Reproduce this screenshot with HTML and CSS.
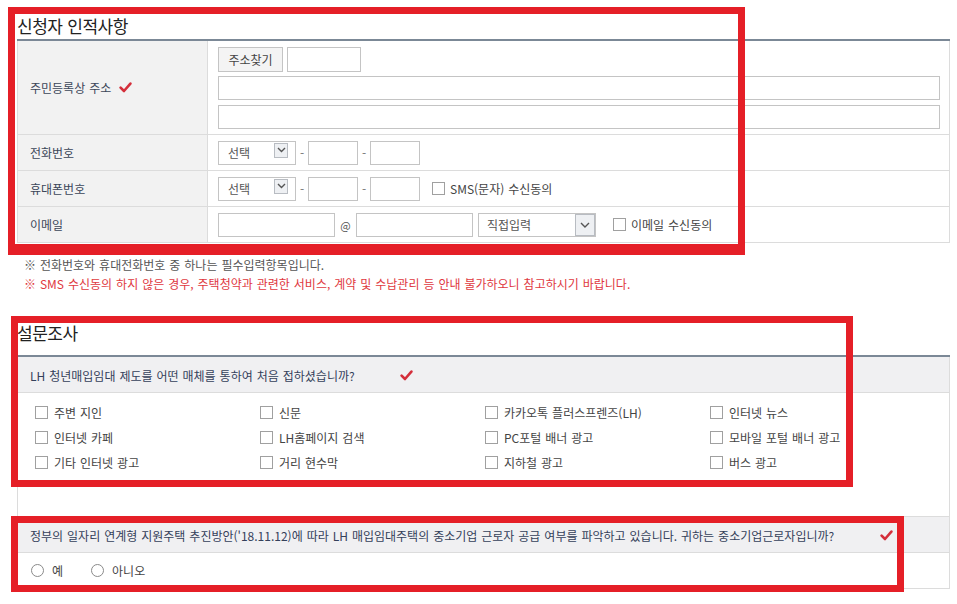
FILE: index.html
```html
<!DOCTYPE html>
<html lang="ko">
<head>
<meta charset="utf-8">
<title>신청자 인적사항</title>
<link rel="stylesheet" href="styles.css">
</head>
<body>
<div class="screen">
  <div class="content">
    <h2 class="sec-title t1">신청자 인적사항</h2>
    <div class="ftable">
      <div class="row row-addr">
        <div class="th">주민등록상 주소
          <svg class="chk" width="13" height="11" viewBox="0 0 13 11"><path d="M1.6 5.6 L5 9 L11.4 1.6" fill="none" stroke="#d42f3b" stroke-width="2.6" stroke-linecap="round" stroke-linejoin="round"/></svg>
        </div>
        <div class="td addr">
          <div class="line1"><span class="btn">주소찾기</span><span class="inp zip"></span></div>
          <span class="inp full"></span>
          <span class="inp full second"></span>
        </div>
      </div>
      <div class="row">
        <div class="th">전화번호</div>
        <div class="td">
          <span class="sel">선택<span class="arr"><svg width="9" height="6" viewBox="0 0 9 6"><path d="M1 1 L4.5 4.5 L8 1" fill="none" stroke="#555" stroke-width="1.4"/></svg></span></span>
          <span class="dash">-</span><span class="inp mid"></span>
          <span class="dash">-</span><span class="inp mid"></span>
        </div>
      </div>
      <div class="row">
        <div class="th">휴대폰번호</div>
        <div class="td">
          <span class="sel">선택<span class="arr"><svg width="9" height="6" viewBox="0 0 9 6"><path d="M1 1 L4.5 4.5 L8 1" fill="none" stroke="#555" stroke-width="1.4"/></svg></span></span>
          <span class="dash">-</span><span class="inp mid"></span>
          <span class="dash">-</span><span class="inp mid"></span>
          <label class="agree sms"><span class="cb"></span>SMS(문자) 수신동의</label>
        </div>
      </div>
      <div class="row">
        <div class="th">이메일</div>
        <div class="td">
          <span class="inp em"></span><span class="at">@</span><span class="inp em"></span>
          <span class="sel wide">직접입력<span class="arr"><svg width="10" height="6" viewBox="0 0 10 6"><path d="M1 1 L5 5 L9 1" fill="none" stroke="#555" stroke-width="1.4"/></svg></span></span>
          <label class="agree mail"><span class="cb"></span>이메일 수신동의</label>
        </div>
      </div>
    </div>
    <p class="note first">※ 전화번호와 휴대전화번호 중 하나는 필수입력항목입니다.</p>
    <p class="note red">※ SMS 수신동의 하지 않은 경우, 주택청약과 관련한 서비스, 계약 및 수납관리 등 안내 불가하오니 참고하시기 바랍니다.</p>

    <h2 class="sec-title t2">설문조사</h2>
    <div class="survey">
      <div class="q">
        <span class="qtext qt1">LH 청년매입임대 제도를 어떤 매체를 통하여 처음 접하셨습니까?</span>
        <svg class="chk" width="13" height="11" viewBox="0 0 13 11"><path d="M1.6 5.6 L5 9 L11.4 1.6" fill="none" stroke="#d42f3b" stroke-width="2.6" stroke-linecap="round" stroke-linejoin="round"/></svg>
      </div>
      <div class="ans1">
        <label class="opt"><span class="cb"></span>주변 지인</label>
        <label class="opt"><span class="cb"></span>신문</label>
        <label class="opt"><span class="cb"></span>카카오톡 플러스프렌즈(LH)</label>
        <label class="opt"><span class="cb"></span>인터넷 뉴스</label>
        <label class="opt"><span class="cb"></span>인터넷 카페</label>
        <label class="opt"><span class="cb"></span>LH홈페이지 검색</label>
        <label class="opt"><span class="cb"></span>PC포털 배너 광고</label>
        <label class="opt"><span class="cb"></span>모바일 포털 배너 광고</label>
        <label class="opt"><span class="cb"></span>기타 인터넷 광고</label>
        <label class="opt"><span class="cb"></span>거리 현수막</label>
        <label class="opt"><span class="cb"></span>지하철 광고</label>
        <label class="opt"><span class="cb"></span>버스 광고</label>
      </div>
      <div class="q">
        <span class="qtext qt2">정부의 일자리 연계형 지원주택 추진방안('18.11.12)에 따라 LH 매입임대주택의 중소기업 근로자 공급 여부를 파악하고 있습니다. 귀하는 중소기업근로자입니까?</span>
        <svg class="chk" width="13" height="11" viewBox="0 0 13 11"><path d="M1.6 5.6 L5 9 L11.4 1.6" fill="none" stroke="#d42f3b" stroke-width="2.6" stroke-linecap="round" stroke-linejoin="round"/></svg>
      </div>
      <div class="ans2">
        <label class="radio yes"><span class="rd"></span>예</label>
        <label class="radio"><span class="rd"></span>아니오</label>
      </div>
    </div>
  </div>

  <div class="mark m1"></div>
  <div class="mark m2"></div>
  <div class="mark m3"></div>
</div>
</body>
</html>
```

FILE: styles.css
```css
* { box-sizing: border-box; }
html, body { margin: 0; padding: 0; background: #fff; }
body {
  font-family: "Noto Sans CJK KR", "Noto Sans", sans-serif;
  font-size: 12px;
  color: #333;
  letter-spacing: 0;
  word-spacing: 0.6px;
}
.screen { position: relative; width: 957px; height: 604px; overflow: hidden; }
.content { margin-left: 17px; width: 933px; }

.sec-title {
  margin: 0;
  font-weight: 400;
  font-size: 17px;
  letter-spacing: -0.5px;
  color: #222;
  line-height: 21px;
  border-bottom: 2px solid #7b8896;
}
.t1 { padding-top: 15px; height: 41px; }
.t2 { margin-top: 29px; height: 35px; }

.ftable { border-left: 1px solid #dcdcdc; border-right: 1px solid #dcdcdc; }
.row { display: flex; height: 36px; border-bottom: 1px solid #dcdcdc; }
.row-addr { height: 94px; }
.th {
  width: 190px;
  flex: none;
  background: #f2f2f2;
  border-right: 1px solid #dcdcdc;
  padding-left: 12px;
  display: flex;
  align-items: center;
  color: #3b4659;
}
.th .chk { margin-left: 8px; }
.td { flex: 1; padding: 0 9px 0 10px; display: flex; align-items: center; }
.td.addr { flex-direction: column; align-items: stretch; justify-content: flex-start; padding-top: 6px; }

.inp { display: block; height: 24px; border: 1px solid #c4c4c4; background: #fff; flex: none; }
.line1 { display: flex; gap: 4px; height: 25px; margin-bottom: 4px; }
.btn {
  height: 25px; width: 65px;
  border: 1px solid #c4c4c4;
  background: #f4f4f4;
  text-align: center;
  line-height: 23px;
  color: #444;
}
.zip { width: 74px; height: 25px; }
.full { width: 100%; }
.second { margin-top: 5px; }

.sel {
  position: relative;
  display: block;
  flex: none;
  width: 78px; height: 24px;
  border: 1px solid #c4c4c4;
  padding-left: 9px;
  line-height: 22px;
  color: #555;
}
.sel .arr {
  position: absolute;
  top: 1px; right: 7px;
  width: 14px; height: 15px;
  border: 1px solid #b8bcc2;
  background: #eef0f3;
  display: flex; align-items: center; justify-content: center;
}
.sel.wide { width: 118px; margin-left: 5px; padding-left: 8px; }
.sel.wide .arr { top: 0; right: 0; width: 20px; height: 22px; }

.dash { width: 12px; text-align: center; color: #777; flex: none; }
.mid { width: 50px; }
.em { width: 117px; }
.at { width: 21px; text-align: center; color: #555; font-size: 11px; flex: none; }

.cb { width: 13px; height: 13px; border: 1px solid #a0a0a0; background: #fff; display: inline-block; flex: none; }
.agree { display: flex; align-items: center; gap: 5px; color: #444; }
.sms { margin-left: 12px; }
.mail { margin-left: 17px; }

.note { margin: 0; line-height: 19px; color: #555; padding-left: 7px; }
.note.first { margin-top: 12px; }
.note.red { color: #e0383e; }

.survey { border-left: 1px solid #dcdcdc; border-right: 1px solid #dcdcdc; }
.q {
  height: 36px;
  background: #f0f0f2;
  border-bottom: 1px solid #dcdcdc;
  padding: 2px 0 0 12px;
  display: flex;
  align-items: center;
  color: #34405a;
}
.qt1 { width: 370px; flex: none; }
.qt2 { width: 850px; flex: none; white-space: nowrap; }
.ans1 {
  height: 124px;
  border-bottom: 1px solid #dcdcdc;
  padding: 7px 0 0 17px;
  display: grid;
  grid-template-columns: repeat(4, 225px);
  grid-auto-rows: 25px;
  align-content: start;
}
.opt { display: flex; align-items: center; gap: 6px; color: #444; }
.ans2 {
  height: 36px;
  border-bottom: 1px solid #dcdcdc;
  display: flex;
  align-items: center;
  padding-left: 13px;
}
.radio { display: flex; align-items: center; gap: 8px; color: #444; }
.radio.yes { margin-right: 28px; }
.rd { width: 13px; height: 13px; border: 1px solid #8a8a8a; border-radius: 50%; background: #fff; flex: none; }

.mark { position: absolute; border: 7px solid #e51f27; pointer-events: none; }
.m1 { left: 8px; top: 7px; width: 737px; height: 248px; border-bottom-width: 11px; }
.m2 { left: 11px; top: 316px; width: 842px; height: 171px; }
.m3 { left: 11px; top: 516px; width: 893px; height: 76px; }
```
